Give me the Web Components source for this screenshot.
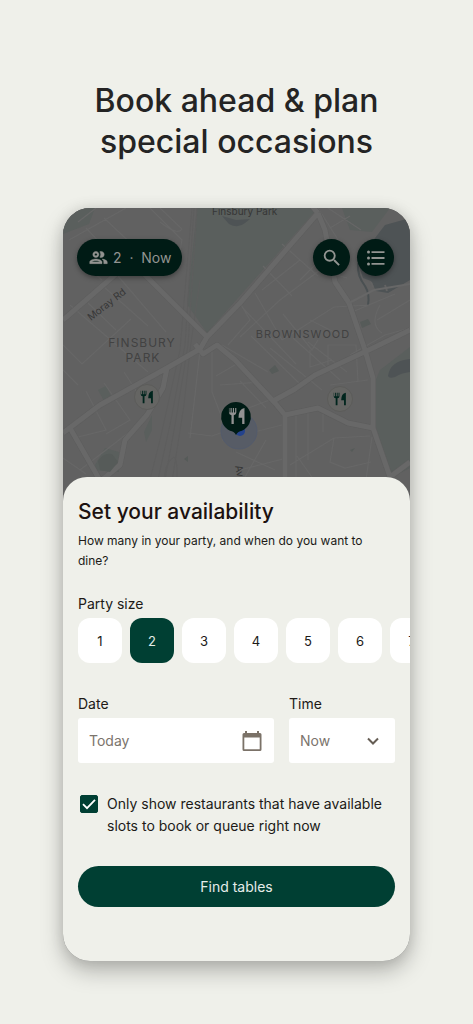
<!DOCTYPE html>
<html lang="en">
<head>
<meta charset="utf-8">
<meta name="viewport" content="width=device-width, initial-scale=1">
<title>Book ahead &amp; plan special occasions</title>
<style>
    body {
        margin: 0;
        background: #eff0ea;
        color: #201a17;
        font-family: Inter, "Liberation Sans", sans-serif;
    }
</style>
</head>
<body>
<promo-page>
    <span slot="title">Book ahead &amp; plan<br>special occasions</span>
    <phone-frame>
        <area-map slot="map"></area-map>
        <map-bar slot="bar"></map-bar>
        <availability-sheet>
            <party-size label="Party size" max="7" value="2"></party-size>
            <date-field slot="when" label="Date" value="Today"></date-field>
            <time-field slot="time" label="Time" value="Now"></time-field>
            <check-option slot="option">Only show restaurants that have available slots to book or queue right now</check-option>
            <main-button slot="action">Find tables</main-button>
        </availability-sheet>
    </phone-frame>
</promo-page>

<script>
(function () {
    function define(name, html, setup) {
        const tmpl = document.createElement('template');
        tmpl.innerHTML = html;

        customElements.define(name, class extends HTMLElement {
            constructor() {
                super();
                this.attachShadow({mode: 'open'});
                this.shadowRoot.appendChild(tmpl.content.cloneNode(true));
            }

            connectedCallback() {
                if (setup && !this._ready) {
                    this._ready = true;
                    setup(this, this.shadowRoot);
                }
            }
        });
    }

    define('promo-page', `
        <style>
            :host {
                display: block;
                box-sizing: border-box;
                min-height: 100vh;
                padding: 80px 63px 60px;
            }
            h1 {
                margin: 0 -40px 46px;
                color: #242424;
                font-size: 32px;
                font-weight: 500;
                line-height: 41px;
                text-align: center;
            }
        </style>
        <h1><slot name="title"></slot></h1>
        <slot></slot>
    `);

    define('phone-frame', `
        <style>
            :host {
                display: grid;
                grid-template-columns: minmax(0, 1fr);
                grid-template-rows: 269px 30px auto;
                overflow: hidden;
                border-radius: 27px;
                background: #616161;
                box-shadow: 0 10px 22px rgba(0, 0, 0, .26), 0 0 14px rgba(0, 0, 0, .1);
            }
            ::slotted([slot="map"]) {
                grid-area: 1 / 1 / 3 / 2;
            }
            ::slotted([slot="bar"]) {
                grid-area: 1 / 1 / 2 / 2;
                z-index: 1;
            }
            ::slotted(availability-sheet) {
                grid-area: 2 / 1 / 4 / 2;
                z-index: 1;
            }
        </style>
        <slot name="map"></slot>
        <slot name="bar"></slot>
        <slot></slot>
    `);

    define('area-map', `
        <style>
            :host { display: block; }
            svg { display: block; width: 100%; height: 100%; }
            .minor { fill: none; stroke: #676767; stroke-width: 1.2; }
            .edge { fill: none; stroke: #5d5d5d; stroke-width: 6; stroke-linejoin: round; }
            .road { fill: none; stroke: #686868; stroke-width: 5; stroke-linejoin: round; }
            .rail { fill: none; stroke: #5e5e5e; stroke-width: 1; }
            .park { fill: #5a5f5d; }
            .water { fill: #4e5355; }
            .area { fill: #424242; font-size: 12px; letter-spacing: 1px; }
            .street { fill: #363636; font-size: 10px; }
        </style>
        <svg viewBox="63 208 347 299" preserveAspectRatio="xMidYMid slice" role="img" aria-label="Map of Finsbury Park and Brownswood">
            <defs>
                <g id="cutlery">
                    <path d="M-7 -7v4q0 2 2.2 2.3V7h2V-.7Q-.6-1-.6-3v-4h-1v4h-1v-4h-1v4h-1v-4h-1v4h-1v-4z"/>
                    <path d="M6.500-7V7h-2V1.500H1.300Q1.300-6 6.500-7z"/>
                </g>
                <path id="roads" d="M63 320L101 287 146 248M140 270L167 297 207 337M63 433L100 405 167 368 200 349 207 337 240 303 318 213M318 213L325 230 335 282 349 303 365 350 373 378V428L390 477 396 507M318 213L312 206M167 368L163 388 147 415 125 440 120 465 90 490M70 428L98 477 110 507M195 344L203 354 217 345 235 360 275 403 285 415V507M275 400L295 389 315 375 373 348 410 330M285 415L318 408 348 423 373 428M390 477L410 462"/>
            </defs>
            <rect x="63" y="208" width="347" height="299" fill="#616161"/>
            <path class="park" d="M197 208L187 304 207 333 318 208zM410 347L380 370 375 382V425L393 477 410 468zM342 208L350 230 372 232 390 208zM92 470l13-22 14 4v20zM144 432l8-17v15l-6 12zM63 208h32l-6 16-26 10zM98 390l8-4 5 10-7 5z"/>
            <path class="water" d="M222 216l7 8q9 5 16-1l5-4-14 1zM410 218L385 225 372 242 358 263 363 278 371 281 376 291 388 293 410 280zM388 376q2-15 22-17v13q-9 1-15 5-6 2-7-1z"/>
            <path d="M358 263q-1 13 7 23 5 8 3 19" fill="none" stroke="#4a5052" stroke-width="2"/>
            <path d="M371 282l2 5m12-2l2 6" fill="none" stroke="#636363" stroke-width="2"/>
            <path class="minor" d="M69 240L126 208M86 228L122 266M104 218L138 250M76 256L102 280M96 208L78 222M150 208L182 240 178 262M160 222Q178 236 182 229L160 208M63 345L82 364 131 319M70 305L148 372M88 303L116 330M104 287L148 326M118 276L166 332M63 370L78 385M86 391L106 430 74 438M104 383L130 420 106 434M124 372L146 406M142 380L152 399M80 470L132 430M63 458L86 474M200 350L195 395 190 438M188 433L212 436 246 424M212 346L212 392 222 418M216 376L240 362M220 385L260 382M240 337L280 300 320 270 347 278M262 290L300 260M300 280L330 250M282 244L318 276M263 266L292 296M242 307L296 364M255 293L282 340M282 340L334 307 370 305M283 314L312 350 318 340M310 320L342 336M222 345L268 372M251 336L302 386M270 348L322 390M293 338L340 380M308 342L347 372M328 365V345H356L358 382M330 385L368 380M240 381L266 408M225 417L275 398M222 440L282 425M245 477L266 440M236 452L275 470M296 414V477M308 410V460M323 409V432M290 465L334 438 370 436M334 438L330 462 345 468 371 462M297 456L314 480M372 437L366 480M318 208L342 246M328 208L361 230M330 228L350 216M380 305Q369 325 382 333M377 320L410 300M352 312L395 294M310 350V367L332 360M240 470L283 459M350 355L385 335 410 328M240 303L250 320 228 345"/>
            <g class="rail">
                <path d="M194 208L185 345 171 420 152 507M197 208L188 345 175 425 160 507M192 208L180 350 160 440 143 507M200 280L190 350 184 405 168 507"/>
                <path d="M165 507Q160 465 174 457 180 461 174 507"/>
            </g>
            <use href="#roads" class="edge"/>
            <use href="#roads" class="road"/>
            <path d="M349 303L374 290 410 284" fill="none" stroke="#676767" stroke-width="2"/>
            <g fill="#565b59">
                <path d="M98 461q6-9 14-7l6 8-8 10-10-2zM184 459l4-3v6zM360 322l8-3 3 5-9 4zM269 370l6-5 4 6-7 3zM350 450l5-2-3 4z"/>
            </g>
            <text class="street" x="212" y="215">Finsbury Park</text>
            <text class="street" transform="translate(91 321) rotate(-38)">Moray Rd</text>
            <text class="area" text-anchor="middle" x="142" y="347">FINSBURY</text>
            <text class="area" text-anchor="middle" x="143" y="362">PARK</text>
            <text class="area" text-anchor="middle" x="303" y="338" style="font-size: 11px">BROWNSWOOD</text>
            <text class="street" transform="translate(235 466) rotate(78)">Av</text>
            <g fill="#656563" stroke="#5c5c5a" stroke-width="1">
                <circle cx="147" cy="397" r="12.500"/>
                <circle cx="340" cy="399" r="12.500"/>
            </g>
            <use href="#cutlery" fill="#00251d" transform="translate(147 397) scale(.9)"/>
            <use href="#cutlery" fill="#00251d" transform="translate(340 399) scale(.9)"/>
            <circle cx="239" cy="431" r="18" fill="#575c66" stroke="#535b6c"/>
            <circle cx="240" cy="431" r="5" fill="#24438d"/>
            <path d="M236 402a15 15 0 0 1 6 28.700Q238 431 236 435 234 431 230 430.700A15 15 0 0 1 236 402z" fill="#001b15"/>
            <use href="#cutlery" fill="#929292" transform="translate(237 416) scale(1.150)"/>
        </svg>
    `);

    define('map-bar', `
        <style>
            :host {
                display: flex;
                align-items: flex-start;
                gap: 7px;
                padding: 31px 16px 0 14px;
            }
            button {
                display: flex;
                align-items: center;
                justify-content: center;
                width: 37px;
                height: 37px;
                padding: 0;
                border: 0;
                border-radius: 19px;
                background: #001b15;
                color: #929491;
                font: 14px/20px Inter, "Liberation Sans", sans-serif;
                box-shadow: 0 2px 5px rgba(0, 0, 0, .35);
            }
            .party {
                gap: 4px;
                width: auto;
                margin-right: auto;
                padding: 0 11px;
                white-space: pre;
            }
            svg { display: block; fill: currentColor; }
        </style>
        <button class="party" type="button"><svg width="21" height="21" viewBox="0 0 24 24"><path stroke="currentColor" stroke-width=".5" d="M9 13.750c-2.340 0-7 1.170-7 3.500V19h14v-1.750c0-2.330-4.660-3.500-7-3.500zM4.340 17c.84-.58 2.870-1.250 4.660-1.250s3.820.67 4.660 1.250H4.340zM9 12c1.930 0 3.500-1.570 3.500-3.500S10.930 5 9 5 5.500 6.570 5.500 8.500 7.070 12 9 12zm0-5c.83 0 1.500.67 1.500 1.500S9.830 10 9 10s-1.500-.67-1.500-1.500S8.170 7 9 7zm7.040 6.810c1.160.84 1.960 1.960 1.960 3.440V19h4v-1.750c0-2.020-3.500-3.170-5.960-3.440zM15 12c1.930 0 3.500-1.570 3.500-3.500S16.930 5 15 5c-.54 0-1.040.13-1.500.35.63.89 1 1.980 1 3.150s-.37 2.260-1 3.150c.46.22.96.35 1.500.35z"/></svg><span>2  ·  Now</span></button>
        <button type="button" aria-label="Search"><svg width="22" height="22" viewBox="0 0 24 24"><path d="M15.500 14h-.79l-.28-.27A6.470 6.470 0 0 0 16 9.500 6.500 6.500 0 1 0 9.500 16c1.610 0 3.090-.59 4.230-1.570l.27.28v.79l5 4.990L20.490 19l-4.990-5zm-6 0C7.010 14 5 11.990 5 9.500S7.010 5 9.500 5 14 7.010 14 9.500 11.990 14 9.500 14z"/></svg></button>
        <button type="button" aria-label="List"><svg width="20" height="16" viewBox="0 0 20 16"><path d="M5.500 1.200H18.500v1.800H5.500zM5.500 7.100H18.500v1.800H5.500zM5.500 13H18.500v1.800H5.500z"/><circle cx="2.500" cy="2.100" r="1.500"/><circle cx="2.500" cy="8" r="1.500"/><circle cx="2.500" cy="13.900" r="1.500"/></svg></button>
    `);

    define('availability-sheet', `
        <style>
            :host {
                display: block;
                padding: 21px 15px 54px;
                border-radius: 24px 24px 0 0;
                background: #eff0ea;
            }
            h2 {
                margin: 0 0 5px;
                color: #1c1210;
                font-size: 21px;
                font-weight: 500;
                line-height: 28px;
            }
            p {
                margin: 0 0 23px;
                font-size: 12px;
                line-height: 20px;
            }
            .fields {
                display: grid;
                grid-template-columns: minmax(0, 1fr) 106px;
                gap: 15px;
                margin: 31px 0 30px;
            }
            ::slotted(check-option) { margin-bottom: 29px; }
        </style>
        <h2>Set your availability</h2>
        <p>How many in your party, and when do you want to dine?</p>
        <slot></slot>
        <div class="fields">
            <slot name="when"></slot>
            <slot name="time"></slot>
        </div>
        <slot name="option"></slot>
        <slot name="action"></slot>
    `);

    define('party-size', `
        <style>
            :host { display: block; margin-right: -15px; }
            fieldset { min-width: 0; margin: 0; padding: 0; border: 0; }
            legend { padding: 0; margin-bottom: 4px; font-size: 14px; line-height: 20px; }
            .sizes { display: flex; gap: 8px; overflow: hidden; }
            label {
                display: grid;
                flex: none;
                place-items: center;
                width: 44px;
                height: 45px;
                border-radius: 12px;
                background: #fff;
                font-size: 13px;
            }
            label:has(:checked) { background: #003f33; color: #e5ece9; }
            input, span { grid-area: 1 / 1; }
            input { appearance: none; width: 44px; height: 45px; margin: 0; border-radius: 12px; }
        </style>
        <fieldset>
            <legend></legend>
            <div class="sizes"></div>
        </fieldset>
    `, function (host, root) {
        const sizes = root.querySelector('.sizes');
        root.querySelector('legend').textContent = host.getAttribute('label');
        for (let i = 1; i <= Number(host.getAttribute('max')); i++) {
            const label = document.createElement('label');
            label.innerHTML = `<input type="radio" name="size" value="${i}"><span>${i}</span>`;
            label.firstChild.checked = String(i) === host.getAttribute('value');
            sizes.appendChild(label);
        }
    });

    const fieldStyle = `
        :host { display: block; }
        label { display: block; margin-bottom: 4px; font-size: 14px; line-height: 20px; }
        .box {
            display: grid;
            align-items: center;
            height: 45px;
            border-radius: 3px;
            background: #fff;
        }
        .box > * { grid-area: 1 / 1; }
        input, select {
            appearance: none;
            box-sizing: border-box;
            width: 100%;
            height: 45px;
            padding: 0 11px;
            border: 0;
            background: none;
            color: #7b746c;
            font: 14px/20px Inter, "Liberation Sans", sans-serif;
        }
        svg { justify-self: end; margin-right: 11px; pointer-events: none; }
    `;

    function setupField(host, root) {
        root.querySelector('label').textContent = host.getAttribute('label');
        const option = root.querySelector('option');
        if (option) {
            option.textContent = host.getAttribute('value');
        } else {
            root.querySelector('input').value = host.getAttribute('value');
        }
    }

    define('date-field', `
        <style>${fieldStyle}</style>
        <label for="date"></label>
        <div class="box">
            <input id="date" type="text">
            <svg width="22" height="22" viewBox="0 0 22 22"><path fill="#7b7268" d="M4 1h2v2h10V1h2v2h1q1.500 0 1.500 1.500v15q0 1.500-1.500 1.500H3q-1.500 0-1.500-1.500v-15Q1.500 3 3 3h1zM3.300 7.500v11.700h15.400V7.500z"/></svg>
        </div>
    `, setupField);

    define('time-field', `
        <style>${fieldStyle}</style>
        <label for="time"></label>
        <div class="box">
            <select id="time"><option></option></select>
            <svg width="22" height="22" viewBox="0 0 22 22"><path fill="none" stroke="#655d54" stroke-width="2" d="M6 8.500l5 5 5-5"/></svg>
        </div>
    `, setupField);

    define('check-option', `
        <style>
            :host { display: block; }
            label {
                display: flex;
                gap: 9px;
                padding-left: 2px;
                font-size: 14px;
                line-height: 22px;
            }
            .tick { display: grid; flex: none; width: 18px; height: 18px; margin-top: 2px; }
            .tick > * { grid-area: 1 / 1; }
            input { appearance: none; width: 18px; height: 18px; margin: 0; border: 1px solid #003f33; border-radius: 2px; }
            input:checked { background: #003f33; }
            svg { z-index: 1; pointer-events: none; }
            input:not(:checked) + svg { display: none; }
        </style>
        <label>
            <span class="tick">
                <input type="checkbox" checked>
                <svg width="18" height="18" viewBox="0 0 18 18"><path fill="none" stroke="#fff" stroke-width="1.800" d="M3 9.200l4 4 8-8.400"/></svg>
            </span>
            <span><slot></slot></span>
        </label>
    `);

    define('main-button', `
        <style>
            :host { display: block; }
            button {
                width: 100%;
                height: 41px;
                padding: 0;
                border: 0;
                border-radius: 21px;
                background: #003f33;
                color: #e5ece9;
                font: 14px/20px Inter, "Liberation Sans", sans-serif;
            }
        </style>
        <button type="button"><slot></slot></button>
    `);
})();
</script>
</body>
</html>
